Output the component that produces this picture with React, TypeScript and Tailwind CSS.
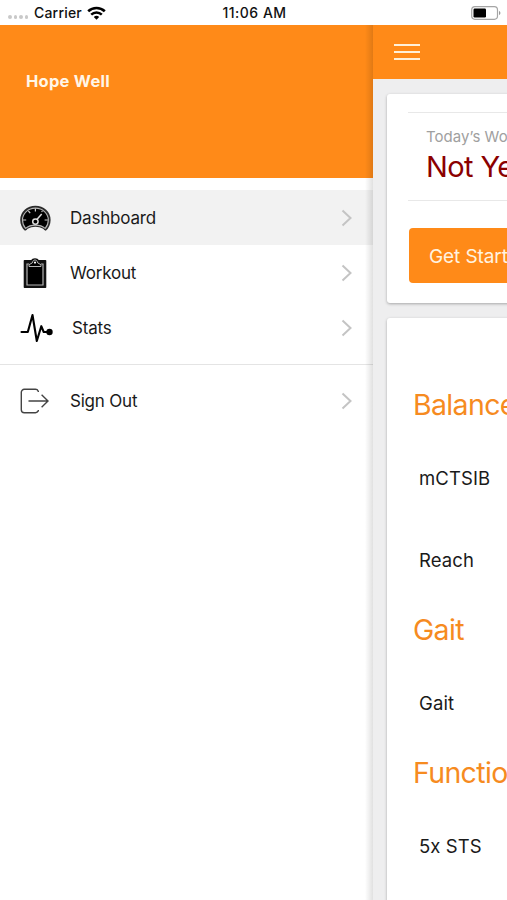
import clsx from 'clsx';

type IconName = 'gauge' | 'clipboard' | 'pulse' | 'exit';

type MenuItem = { label: string; icon: IconName; active?: boolean; labelClass?: string };

const mainItems: MenuItem[] = [
  { label: 'Dashboard', icon: 'gauge', active: true },
  { label: 'Workout', icon: 'clipboard' },
  { label: 'Stats', icon: 'pulse', labelClass: 'ml-[2px]' },
];

const sections = [
  { title: 'Balance', tests: ['mCTSIB', 'Reach'] },
  { title: 'Gait', tests: ['Gait'] },
  { title: 'Functional', tests: ['5x STS'] },
];

function Icon({ name }: { name: IconName }) {
  const cls = 'h-8 w-8 shrink-0 overflow-visible';
  if (name === 'gauge') {
    return (
      <svg className={cls} viewBox="0 0 32 32" fill="none" aria-hidden="true">
        <path d="M6 28.8C3 26 1.200 22.300 1.200 17.900a15.200 14.200 0 0 1 30.400 0c0 4.400-1.800 8.100-4.800 10.900-1.100-.3-2-1-2.600-2-4.600-2.700-11-2.700-15.600 0-.6 1-1.500 1.700-2.600 2Z" fill="#2a2a2a" />
        <path d="M6.600 26.400C4.600 24 3.500 21.100 3.500 17.900a12.900 11.800 0 0 1 25.800 0c0 3.200-1.100 6.100-3.100 8.500-5-4.400-14.600-4.400-19.600 0Z" fill="#000" stroke="#b5b5b5" strokeWidth="1.100" strokeLinejoin="round" />
        <path d="M16.400 6.500v3M9.400 9l1.800 2.200M4 18h3.200M28.800 18h-3.200M23.400 9l-.8 1" stroke="#ccc" strokeWidth="1.200" />
        <path d="M17.900 17.500l4.800-5.400" stroke="#ddd" strokeWidth="1.500" />
        <circle cx="16.400" cy="19.600" r="2.700" stroke="#ddd" strokeWidth="1.500" />
      </svg>
    );
  }
  if (name === 'clipboard') {
    return (
      <svg className={cls} viewBox="0 0 32 32" fill="none" aria-hidden="true">
        <path d="M5.500 3h21a.8.800 0 0 1 .8.800v26.400a.8.800 0 0 1-.8.800h-21a.8.800 0 0 1-.8-.8V3.800a.8.800 0 0 1 .8-.8Z" fill="#111" />
        <path d="M12 3.500c.8-1.500 2-2.300 4-2.300s3.200.8 4 2.300Z" fill="#111" />
        <path d="M10 7H8v21h16V7h-2" fill="#000" stroke="#b5b5b5" strokeWidth="1.200" />
        <path d="M10 9.500V7.700L13.200 6c.5-2 1.400-3 2.800-3s2.300 1 2.800 3L22 7.700v1.800Z" fill="#000" stroke="#b5b5b5" strokeWidth="1" />
        <circle cx="16" cy="5.600" r="1.100" fill="#fff" />
      </svg>
    );
  }
  if (name === 'pulse') {
    return (
      <svg className={cls} viewBox="0 0 32 32" fill="none" aria-hidden="true">
        <path d="M2.500 20h6.300L13.500 3 17.800 29l4.500-14.800 2.400 5.800h5" stroke="#000" strokeWidth="2.100" strokeLinejoin="round" strokeLinecap="round" />
        <circle cx="30.500" cy="20" r="3.200" fill="#000" />
      </svg>
    );
  }
  return (
    <svg className={cls} viewBox="0 0 32 32" fill="none" stroke="#444" strokeWidth="1.400" aria-hidden="true">
      <path d="M19.300 7v-.8C18.700 4.900 17.700 4.300 16.500 4.300H5.300a3 3 0 0 0-3 3v17.400a3 3 0 0 0 3 3h11.200c1.200 0 2.200-.7 2.800-1.800V25" />
      <path d="M9.500 16h19.500M22.600 9.800 29 16l-6.400 6.200" />
    </svg>
  );
}

function StatusBar() {
  return (
    <div className="relative z-20 flex h-[25px] shrink-0 items-center bg-white text-[14px] font-medium text-[#111]">
      <div className="flex flex-1 items-center pl-2">
        <span className="mt-[9px] flex gap-[2px]">
          {[0, 1, 2, 3].map((i) => (
            <span key={i} className="h-[3.5px] w-[3.5px] rounded-full bg-[#c9c9c9]" />
          ))}
        </span>
        <span className="-mt-px ml-[6px] tracking-[0.2px]">Carrier</span>
        <svg className="ml-[5px] h-[14px] w-[19px]" viewBox="0 0 19 14" fill="none" aria-hidden="true">
          <path d="M1.200 5.300a12 12 0 0 1 16.600 0" stroke="#000" strokeWidth="2.600" />
          <path d="M4.200 8.600a7.600 7.600 0 0 1 10.600 0" stroke="#000" strokeWidth="2.500" />
          <path d="M6.800 11a4 4 0 0 1 5.400 0l-2.700 2.800Z" fill="#000" />
        </svg>
      </div>
      <span className="-mt-px tracking-[0.5px]">11:06 AM</span>
      <div className="flex flex-1 justify-end pr-[6px]">
        <svg className="h-[14px] w-[30px]" viewBox="0 0 30 14" fill="none" aria-hidden="true">
          <rect x=".7" y=".7" width="25.800" height="12.600" rx="3.200" stroke="#a5a5a5" strokeWidth="1.200" />
          <rect x="2.500" y="2.500" width="12.500" height="9" rx="1.200" fill="#000" />
          <path d="M28 5v4c.8-.3 1.400-1.100 1.400-2S28.800 5.300 28 5Z" fill="#999" />
        </svg>
      </div>
    </div>
  );
}

function MenuRow({ label, icon, active, labelClass }: MenuItem) {
  return (
    <li className={clsx('flex h-[55px] items-center pl-[19px] pr-[20px]', active && 'bg-[#f2f2f2]')}>
      <Icon name={icon} />
      <span className="ml-[19px] flex-1 pt-[2px] text-[17px] tracking-[-0.2px] text-[#1a1a1a]">
        <span className={labelClass}>{label}</span>
      </span>
      <svg className="h-[18px] w-[12px]" viewBox="0 0 12 18" fill="none" aria-hidden="true">
        <path d="M1.500 1.500 9.500 9l-8 7.500" stroke="#c4c4c4" strokeWidth="2" />
      </svg>
    </li>
  );
}

function SideMenu() {
  return (
    <aside className="relative w-[373px] shrink-0 bg-white">
      <div className="h-[153px] bg-[#ff8a18] pl-[26px] pt-[44px]">
        <p className="text-[16.5px] font-bold leading-6 tracking-[0.25px] text-[#fff6e8]">Hope Well</p>
      </div>
      <ul className="pt-3">
        {mainItems.map((item) => (
          <MenuRow key={item.label} {...item} />
        ))}
      </ul>
      <ul className="mt-[9px] border-t border-[#e4e4e4] pt-[8px]">
        <MenuRow label="Sign Out" icon="exit" />
      </ul>
      {/* shadow cast by the page on top of the menu */}
      <div className="absolute inset-y-0 right-0 w-[8px] bg-linear-to-l from-black/12 to-transparent" />
    </aside>
  );
}

export default function App() {
  return (
    <div className="flex h-[900px] w-[507px] flex-col overflow-hidden bg-white font-['Inter',sans-serif]">
      <StatusBar />
      <div className="flex min-h-0 flex-1">
        <SideMenu />
        <main className="min-w-0 flex-1 overflow-hidden bg-[#eeeeef]">
          <div className="w-[480px]">
            <header className="flex h-[54px] items-center bg-[#ff8a18] pl-[21px]">
              <button className="flex w-[26px] flex-col gap-[5px]" aria-label="Menu">
                <span className="h-[2px] w-full bg-[#fff0d8]" />
                <span className="h-[2px] w-full bg-[#fff0d8]" />
                <span className="h-[2px] w-full bg-[#fff0d8]" />
              </button>
            </header>

            <section className="ml-[14px] mt-[15px] h-[209px] rounded-[3px] bg-white pl-[21px] pt-[18px] shadow-[0_1px_3px_rgba(0,0,0,0.3)]">
              <div className="h-[89px] border-y border-[#e8e8e8] pl-[18px] pt-[14px]">
                <p className="text-[15px] leading-[20px] tracking-[0.05px] text-[#a0a0a0]">Today’s Workout</p>
                <p className="mt-[2px] text-[29px] leading-[36px] tracking-[-0.6px] text-[#8b0000]">Not Yet Started</p>
              </div>
              <button className="ml-px mt-[27px] flex h-[55px] w-[400px] items-center rounded-[4px] bg-[#ff8a18] pl-[20px] pt-[3px] text-[19px] tracking-[-0.1px] text-[#fff3e0]">
                Get Started
              </button>
            </section>

            <section className="ml-[14px] mt-[15px] h-[700px] rounded-[3px] bg-white pl-[26px] pt-[57px] shadow-[0_1px_3px_rgba(0,0,0,0.3)]">
              {sections.map((section) => (
                <div key={section.title}>
                  <h2 className="h-[61px] pt-[12px] text-[28.5px] leading-[36px] tracking-[-0.65px] text-[#f68b1f]">{section.title}</h2>
                  <ul className="pl-[6px]">
                    {section.tests.map((test) => (
                      <li key={test} className="flex h-[82px] items-center pt-[4px] text-[18.5px] tracking-[0.1px] text-[#1a1a1a]">
                        {test}
                      </li>
                    ))}
                  </ul>
                </div>
              ))}
            </section>
          </div>
        </main>
      </div>
    </div>
  );
}
